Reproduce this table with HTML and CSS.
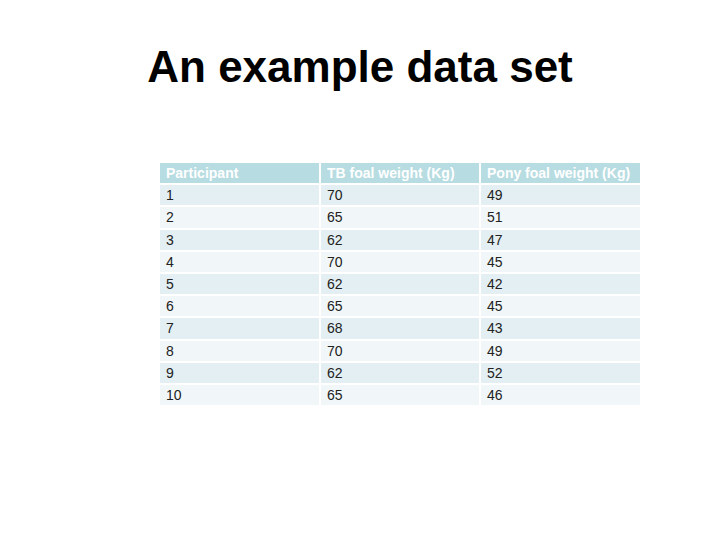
FILE: index.html
```html
<!DOCTYPE html>
<html>
<head>
<meta charset="utf-8">
<link rel="stylesheet" href="styles.css">
</head>
<body>
<h1 class="title">An example data set</h1>
<table class="data">
  <colgroup><col class="c1"><col class="c2"><col class="c3"></colgroup>
  <thead>
    <tr><th>Participant</th><th>TB foal weight (Kg)</th><th>Pony foal weight (Kg)</th></tr>
  </thead>
  <tbody>
    <tr><td>1</td><td>70</td><td>49</td></tr>
    <tr><td>2</td><td>65</td><td>51</td></tr>
    <tr><td>3</td><td>62</td><td>47</td></tr>
    <tr><td>4</td><td>70</td><td>45</td></tr>
    <tr><td>5</td><td>62</td><td>42</td></tr>
    <tr><td>6</td><td>65</td><td>45</td></tr>
    <tr><td>7</td><td>68</td><td>43</td></tr>
    <tr><td>8</td><td>70</td><td>49</td></tr>
    <tr><td>9</td><td>62</td><td>52</td></tr>
    <tr><td>10</td><td>65</td><td>46</td></tr>
  </tbody>
</table>
</body>
</html>
```
FILE: styles.css
```css
html, body {
  margin: 0;
  padding: 0;
  background: #ffffff;
  width: 720px;
  height: 540px;
  overflow: hidden;
}
body {
  font-family: "Liberation Sans", Arial, sans-serif;
}
.title {
  margin: 42px 0 0 0;
  font-size: 44px;
  line-height: 50px;
  font-weight: bold;
  color: #000;
  text-align: center;
}
.data {
  margin: 69px 0 0 158px;
  border-collapse: separate;
  border-spacing: 2px;
  table-layout: fixed;
  width: 484px;
}
.c1 { width: 159px; }
.c2 { width: 158px; }
.c3 { width: 159px; }
.data th, .data td {
  height: 20.2px;
  line-height: 20px;
  padding: 0 6px;
  text-align: left;
  font-size: 14px;
  white-space: nowrap;
}
.data th {
  background: #b7dce1;
  color: #ffffff;
  font-weight: bold;
}
.data td {
  color: #222222;
}
.data tbody tr:nth-child(odd) td {
  background: #e3eff2;
}
.data tbody tr:nth-child(even) td {
  background: #f1f7f9;
}
```
